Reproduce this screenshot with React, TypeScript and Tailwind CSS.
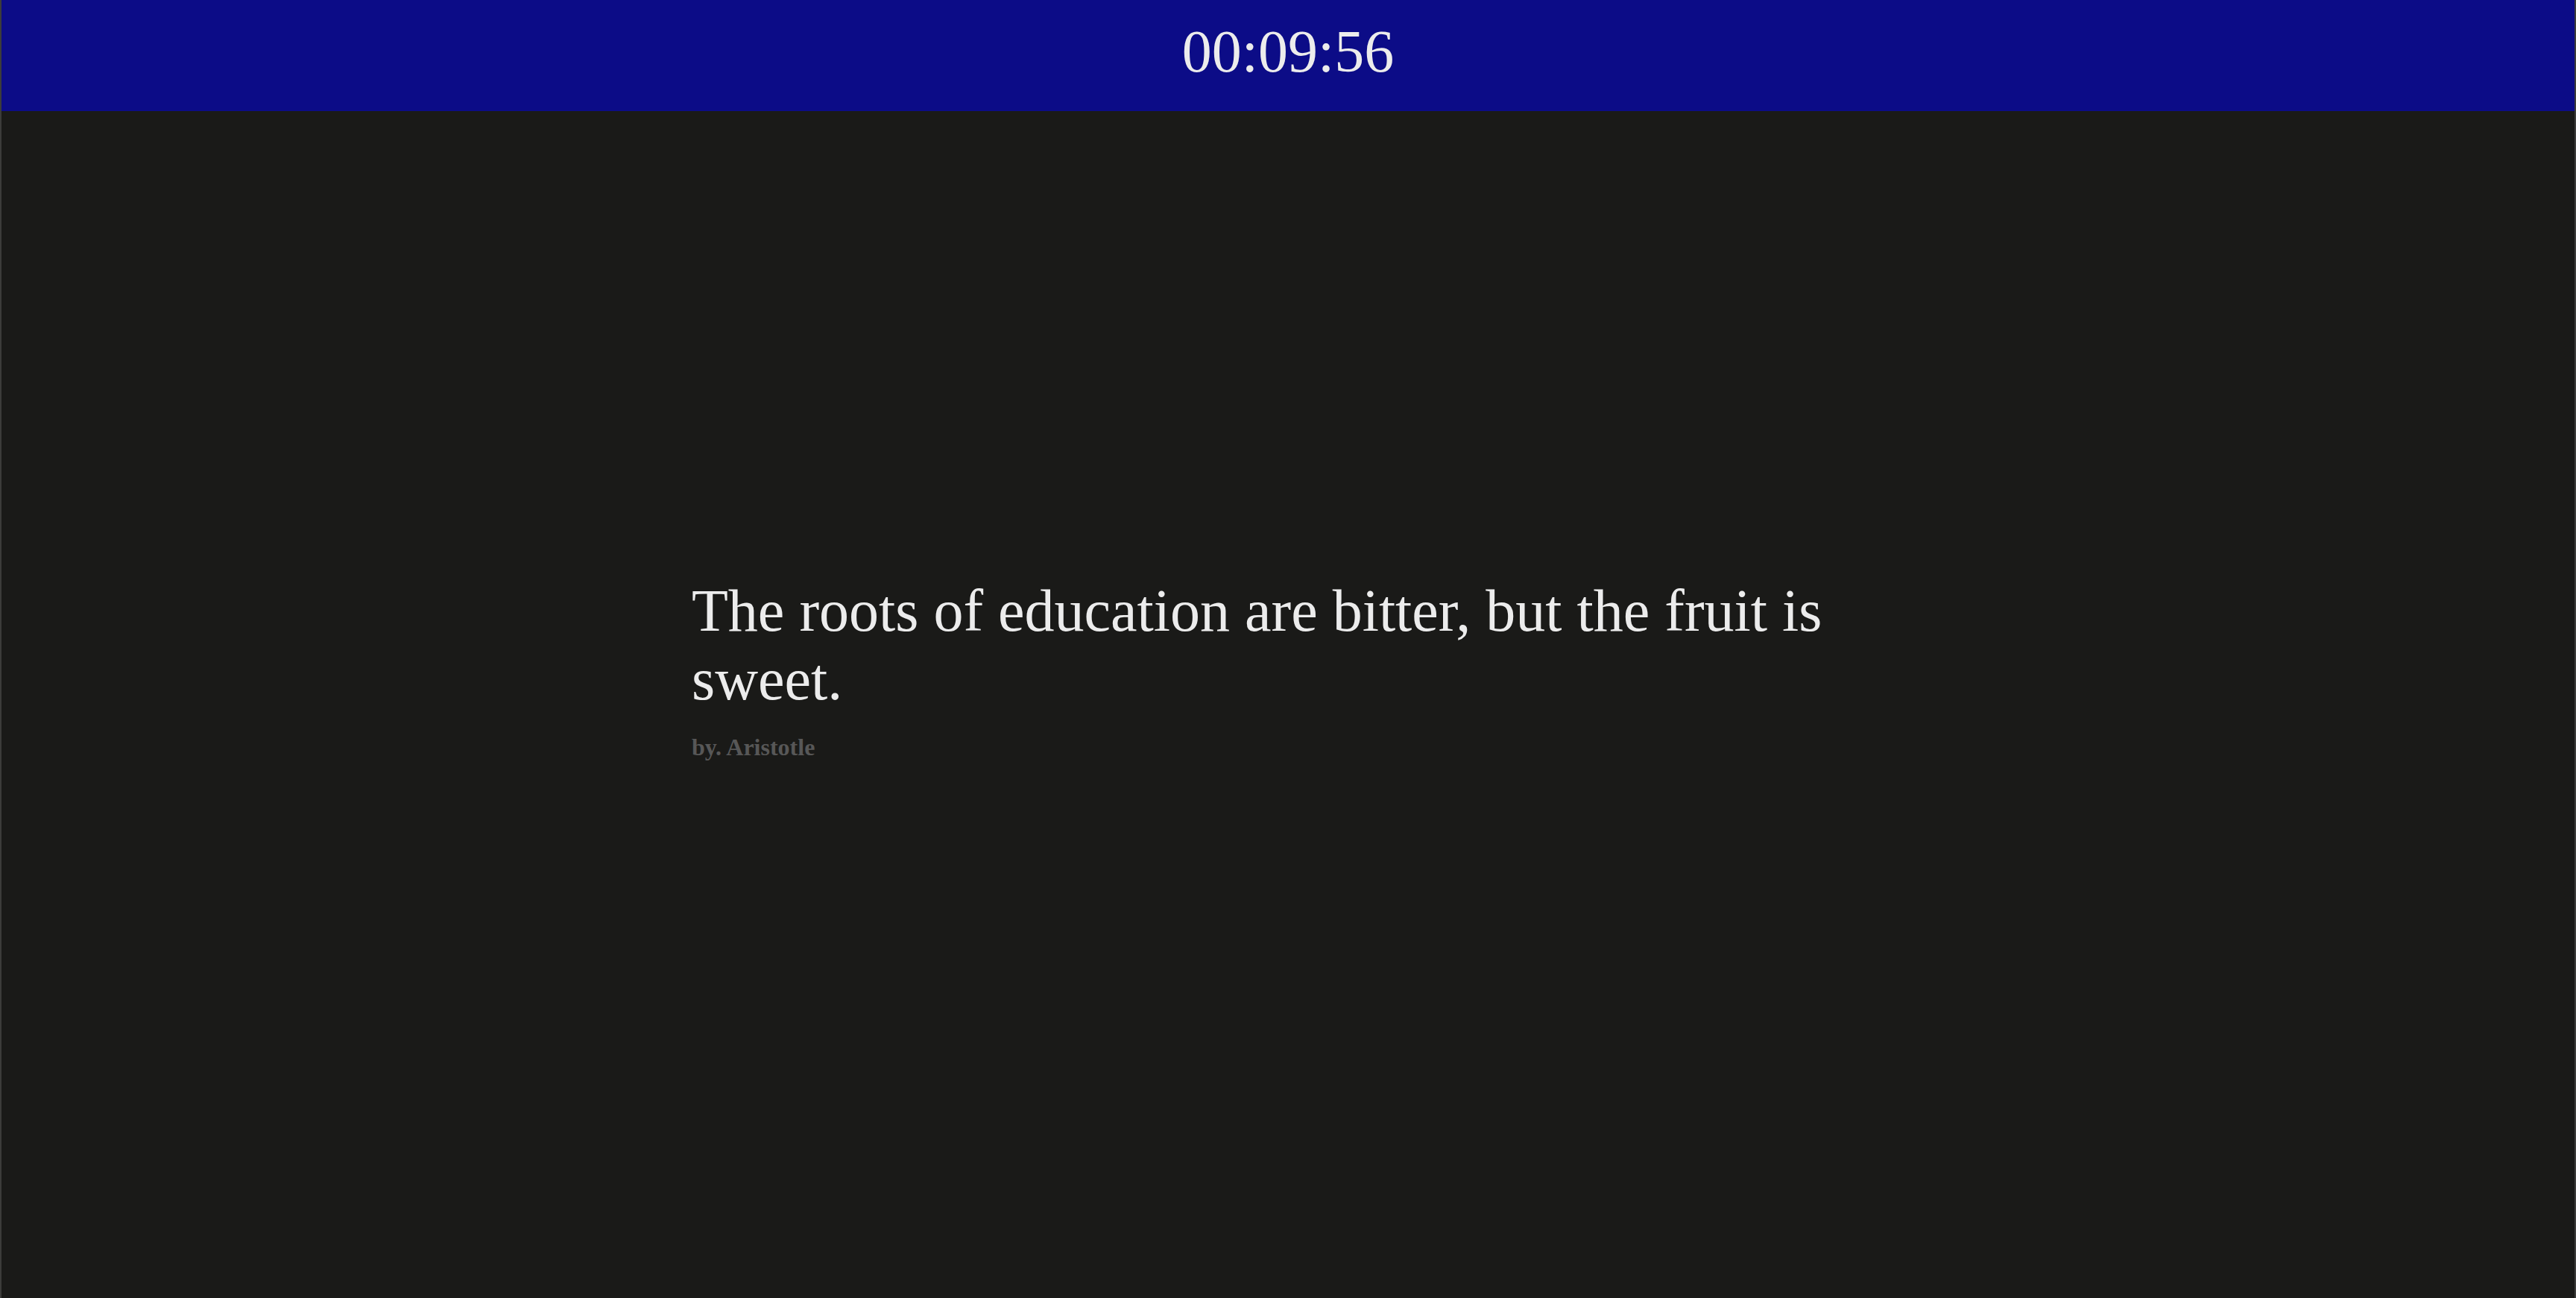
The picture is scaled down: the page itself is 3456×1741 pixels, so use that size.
const App = () => {
    const quote = {
        text: "The roots of education are bitter, but the fruit is sweet.",
        author: "Aristotle"
    };

    return (
        <div className="min-h-screen flex flex-col bg-[#1a1a18] border-x-2 border-white/15 font-['Liberation_Serif',_'Times_New_Roman',_serif]">
            {/* Timer bar */}
            <header className="h-[149px] bg-[#0c0c87] flex justify-center pt-[23px]">
                <span className="text-[80px] leading-[92px] text-[#ececec]">00:09:56</span>
            </header>

            {/* Quote */}
            <main className="flex-1 pt-[624px]">
                <div className="w-[1600px] mx-auto">
                    <p className="text-[80px] leading-[92px] text-[#ececec]">{quote.text}</p>
                    <p className="mt-[27px] text-[32px] leading-[37px] font-bold text-[#575757]">by. {quote.author}</p>
                </div>
            </main>
        </div>
    );
};

export default App;
